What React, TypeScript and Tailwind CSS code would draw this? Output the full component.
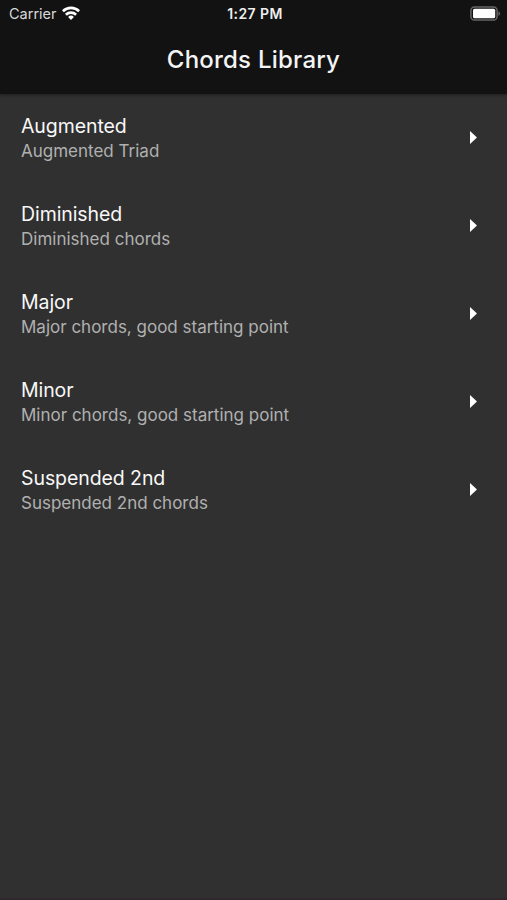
const chords = [
  { name: "Augmented", description: "Augmented Triad" },
  { name: "Diminished", description: "Diminished chords" },
  { name: "Major", description: "Major chords, good starting point" },
  { name: "Minor", description: "Minor chords, good starting point" },
  { name: "Suspended 2nd", description: "Suspended 2nd chords" },
];

function WifiIcon() {
  return (
    <svg width="18" height="14" viewBox="0 0 18 14" className="mb-px ml-[5px]" fill="none" stroke="white" strokeWidth="2.7">
      <path d="M0.9 5.2a11.6 11.6 0 0 1 16.2 0" />
      <path d="M3.9 8.7a7.3 7.3 0 0 1 10.2 0" />
      <path d="M9 13.9 6.1 10.9a4.2 4.2 0 0 1 5.8 0z" fill="white" stroke="none" />
    </svg>
  );
}

function BatteryIcon() {
  return (
    <svg width="31" height="15" viewBox="0 0 31 15" className="mb-px">
      <rect x="0.9" y="0.9" width="26.2" height="13.2" rx="3.6" fill="none" stroke="#666666" strokeWidth="1.5" />
      <rect x="3" y="2.7" width="22.2" height="9.6" rx="1.6" fill="white" />
      <path d="M28.4 5.2c2.2.8 2.2 3.8 0 4.6z" fill="#666666" />
    </svg>
  );
}

function StatusBar() {
  return (
    <div className="grid h-[27px] grid-cols-[1fr_auto_1fr] items-center pl-[9px] pr-[6px] text-[14.5px] text-white">
      <div className="flex items-center">
        <span className="text-[#d8d8d8]">Carrier</span>
        <WifiIcon />
      </div>
      <span className="text-center text-[14px] font-semibold tracking-[0.4px] text-[#eeeeee]">1:27 PM</span>
      <div className="flex justify-end">
        <BatteryIcon />
      </div>
    </div>
  );
}

export default function App() {
  return (
    <div className="flex h-[900px] w-[507px] flex-col overflow-hidden bg-[#303030] font-['Inter',sans-serif]">
      <header className="h-[94px] shrink-0 bg-[#121212] shadow-[0_1px_3px_rgba(0,0,0,0.4)]">
        <StatusBar />
        <h1 className="flex h-[66px] items-center justify-center text-[24px] font-medium tracking-[0.22px] text-[#f4f4f4]">
          Chords Library
        </h1>
      </header>

      <ul className="flex-1">
        {chords.map(({ name, description }) => (
          <li key={name} className="flex h-[88px] items-center justify-between pl-[21px] pr-[30px]">
            <div>
              <div className="text-[19.5px] leading-[26px] tracking-[-0.08px] text-[#f8f8f8]">{name}</div>
              <div className="text-[17px] leading-[25px] text-[#b0b0b0]">{description}</div>
            </div>
            <svg width="7" height="13" viewBox="0 0 7 13" fill="white" className="mb-0.5">
              <path d="M0 0v13l7-6.5z" />
            </svg>
          </li>
        ))}
      </ul>
      <div className="h-[2px] bg-[#30262c]" />
    </div>
  );
}
